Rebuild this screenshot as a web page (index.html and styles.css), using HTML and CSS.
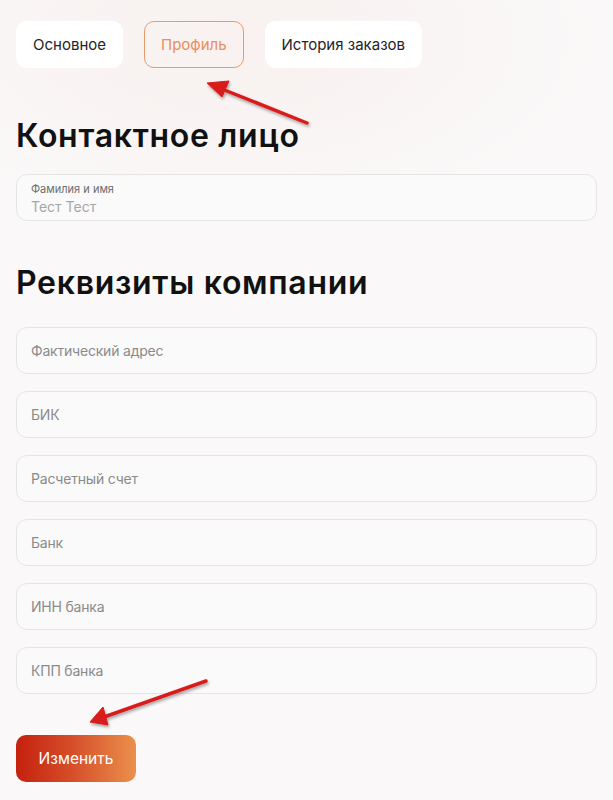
FILE: index.html
```html
<!DOCTYPE html>
<html lang="ru">
<head>
<meta charset="utf-8">
<link rel="stylesheet" href="styles.css">
</head>
<body>
<div class="page">
  <nav class="tabs">
    <div class="tab">Основное</div>
    <div class="tab tab-active">Профиль</div>
    <div class="tab">История заказов</div>
  </nav>

  <h2 class="title title-first">Контактное лицо</h2>
  <div class="field field-filled">
    <span class="field-label">Фамилия и имя</span>
    <span class="field-value">Тест Тест</span>
  </div>

  <h2 class="title title-second">Реквизиты компании</h2>
  <div class="fields">
    <div class="field"><span class="field-placeholder">Фактический адрес</span></div>
    <div class="field"><span class="field-placeholder">БИК</span></div>
    <div class="field"><span class="field-placeholder">Расчетный счет</span></div>
    <div class="field"><span class="field-placeholder">Банк</span></div>
    <div class="field"><span class="field-placeholder">ИНН банка</span></div>
    <div class="field"><span class="field-placeholder">КПП банка</span></div>
  </div>

  <button class="btn">Изменить</button>

  <svg class="arrows" width="613" height="800" viewBox="0 0 613 800">
    <defs>
      <filter id="sh" x="-20%" y="-20%" width="140%" height="140%">
        <feDropShadow dx="1" dy="2" stdDeviation="1.5" flood-color="#000" flood-opacity="0.35"/>
      </filter>
    </defs>
    <g filter="url(#sh)" fill="#d81e1e" stroke="#d81e1e">
      <line x1="307" y1="123" x2="222" y2="89" stroke-width="3.5" stroke-linecap="round"/>
      <polygon points="207,83 229,81 222,97" stroke-width="1" stroke-linejoin="round"/>
      <line x1="206" y1="681" x2="104" y2="717" stroke-width="3.5" stroke-linecap="round"/>
      <polygon points="90,722 103,707 108,725" stroke-width="1" stroke-linejoin="round"/>
    </g>
  </svg>
</div>
</body>
</html>
```

FILE: styles.css
```css
* { box-sizing: border-box; }
html, body { margin: 0; padding: 0; }
body {
  width: 613px;
  height: 800px;
  overflow: hidden;
  background: radial-gradient(ellipse 520px 260px at 230px 40px, #f8f1ef 0%, #faf8f8 70%), #faf9f9;
  font-family: Inter, "Noto Sans", sans-serif;
  color: #1c1c1c;
}
.page {
  position: relative;
  padding: 21px 16px 0 16px;
  height: 800px;
}
.tabs {
  display: flex;
  gap: 21px;
}
.tab {
  height: 47px;
  padding: 0 16px;
  display: flex;
  align-items: center;
  background: #ffffff;
  border: 1px solid #ffffff;
  border-radius: 10px;
  font-size: 15px;
  color: #23232a;
}
.tab-active {
  background: transparent;
  border-color: #e89a6a;
  color: #e98e5d;
}
.title {
  margin: 0;
  font-family: Inter, "Noto Sans", sans-serif;
  font-weight: 600;
  font-size: 32px;
  letter-spacing: 0.7px;
  color: #111;
  line-height: 36px;
}
.title-first { margin-top: 50px; }
.title-second { margin-top: 44px; }
.field {
  height: 47px;
  border: 1px solid #e7e4e4;
  border-radius: 11px;
  background: #fbfafa;
  display: flex;
  flex-direction: column;
  justify-content: center;
  padding: 0 14px;
}
.field-filled {
  margin-top: 20px;
  justify-content: flex-start;
  padding-top: 7px;
}
.field-label {
  font-size: 11px;
  color: #6d6d6d;
  line-height: 14px;
}
.field-value {
  font-size: 14px;
  color: #a6a6a6;
  line-height: 18px;
  margin-top: 2px;
}
.fields {
  margin-top: 26px;
  display: flex;
  flex-direction: column;
  gap: 17px;
}
.field-placeholder {
  font-size: 14px;
  color: #8a8a8a;
  letter-spacing: -0.2px;
}
.btn {
  margin-top: 41px;
  width: 120px;
  height: 47px;
  border: none;
  border-radius: 10px;
  background: linear-gradient(90deg, #c5210f 0%, #d54c28 45%, #ea904c 100%);
  color: #fff;
  font-family: Inter, sans-serif;
  font-size: 15.5px;
  padding: 0;
}
.arrows {
  position: absolute;
  left: 0;
  top: 0;
  pointer-events: none;
}
```
